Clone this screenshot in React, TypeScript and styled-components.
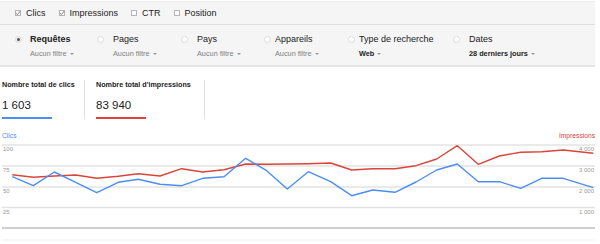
import * as React from 'react'
import styled, { createGlobalStyle } from 'styled-components'

const GlobalStyle = createGlobalStyle`
    body {
        margin: 0;
        background: #fff;
        font-family: "Liberation Sans", Arial, sans-serif;
        color: #222;
    }
`

type Pt = [number, number]

// points read off the chart, page coordinates (y offset by chart top later)
const clics: Pt[] = [
    [12.3, 176.7], [33.3, 185.7], [54.3, 172], [75.7, 182.3], [96.7, 192.7], [118.3, 182.3],
    [138.3, 179.3], [160, 184.3], [181.7, 185.7], [202.7, 178.3], [224, 176.7], [245.7, 158.3],
    [266.7, 170.7], [287.3, 189], [308.3, 171.7], [330.7, 181.7], [351.7, 195.7], [372.7, 190],
    [395, 192.3], [416, 182], [436.7, 170], [457.3, 164], [478.3, 181.7], [499.3, 181.7],
    [520.7, 188.3], [541.7, 178.3], [563.3, 178.3], [593.3, 187.7],
]

const impressions: Pt[] = [
    [12.3, 174.7], [33.3, 177.3], [54.3, 176], [75.7, 175], [96.7, 178.3], [118.3, 176.3],
    [138.3, 173.7], [160, 176], [181.7, 168.7], [202.7, 172], [224, 169.7], [245.7, 164],
    [266.7, 164.3], [287.3, 164], [308.3, 163.7], [330.7, 163], [351.7, 170], [372.7, 168.7],
    [395, 168.7], [416, 165.7], [436.7, 159], [457.3, 145.7], [478.3, 164.3], [499.3, 156],
    [520.7, 152.3], [541.7, 151.7], [563.3, 150], [593.3, 153.3],
]

const CHART_TOP = 140

const toPath = (pts: Pt[]) =>
    pts.map(([x, y]) => `${x},${(y - CHART_TOP).toFixed(1)}`).join(' ')

const metricsToggles = [
    { label: 'Clics', checked: true },
    { label: 'Impressions', checked: true },
    { label: 'CTR', checked: false },
    { label: 'Position', checked: false },
]

const filters = [
    { title: 'Requêtes', sub: 'Aucun filtre', selected: true, width: 82, gap: 8, strong: false },
    { title: 'Pages', sub: 'Aucun filtre', selected: false, width: 84, gap: 9, strong: false },
    { title: 'Pays', sub: 'Aucun filtre', selected: false, width: 83, gap: 9, strong: false },
    { title: 'Appareils', sub: 'Aucun filtre', selected: false, width: 84, gap: 4, strong: false },
    { title: 'Type de recherche', sub: 'Web', selected: false, width: 105, gap: 4, strong: true },
    { title: 'Dates', sub: '28 derniers jours', selected: false, width: 120, gap: 9, strong: true },
]

const grid = [
    { y: 5, left: '100', right: '4 000' },
    { y: 26, left: '75', right: '3 000' },
    { y: 47, left: '50', right: '2 000' },
    { y: 67.5, left: '25', right: '1 000' },
]

const App = () => {
    return (
        <Page>
            <GlobalStyle />
            <TopBar>
                {metricsToggles.map(t => (
                    <Toggle key={t.label}>
                        <CheckBox>
                            {t.checked && (
                                <svg width="6" height="6" viewBox="0 0 6 6">
                                    <path d="M0.8 3.1 L2.4 4.6 L5.3 1" fill="none" stroke="#777" strokeWidth="0.9" />
                                </svg>
                            )}
                        </CheckBox>
                        {t.label}
                    </Toggle>
                ))}
            </TopBar>

            <FilterBar>
                {filters.map(f => (
                    <Filter key={f.title} $w={f.width} $gap={f.gap}>
                        <Radio $on={f.selected} />
                        <div>
                            <FilterTitle $on={f.selected}>{f.title}</FilterTitle>
                            <FilterSub $strong={f.strong}>
                                {f.sub}
                                <Caret />
                            </FilterSub>
                        </div>
                    </Filter>
                ))}
            </FilterBar>

            <Metrics>
                <Metric $w={85} $pad={2}>
                    <MetricTitle>Nombre total de clics</MetricTitle>
                    <MetricValue>1 603</MetricValue>
                    <Underline $color="#4d8df6" />
                </Metric>
                <Metric $w={120} $pad={11}>
                    <MetricTitle>Nombre total d'impressions</MetricTitle>
                    <MetricValue>83 940</MetricValue>
                    <Underline $color="#d9453a" />
                </Metric>
            </Metrics>

            <Legend>
                <LegendLabel $color="#4d8df6">Clics</LegendLabel>
                <LegendLabel $color="#d9453a">Impressions</LegendLabel>
            </Legend>

            <Chart width="595" height="104" viewBox="0 0 595 104">
                {grid.map(g => (
                    <line key={g.left} x1="2" x2="595" y1={g.y} y2={g.y} stroke="#e3e3e3" strokeWidth="1.3" />
                ))}
                <line x1="2" x2="595" y1="88" y2="88" stroke="#9e9e9e" strokeWidth="1" />
                <line x1="2" x2="595" y1="100" y2="100" stroke="#f0f0f0" strokeWidth="1" />
                {grid.map(g => (
                    <React.Fragment key={'t' + g.left}>
                        <AxisText x="3" y={g.y + 6}>{g.left}</AxisText>
                        <AxisText x="594" y={g.y + 6} textAnchor="end">{g.right}</AxisText>
                    </React.Fragment>
                ))}
                <polyline points={toPath(impressions)} fill="none" stroke="#d9453a" strokeWidth="1.4" strokeLinejoin="round" />
                <polyline points={toPath(clics)} fill="none" stroke="#4d8df6" strokeWidth="1.4" strokeLinejoin="round" />
            </Chart>
        </Page>
    )
}

const Page = styled.div`
    width: 595px;
`

const TopBar = styled.div`
    margin-top: 1px;
    height: 22px;
    display: flex;
    align-items: center;
    padding-left: 15px;
    background: #f5f5f5;
    border-top: 1px solid #ebebeb;
    border-bottom: 1px solid #e0e0e0;
`

const Toggle = styled.label`
    display: flex;
    align-items: center;
    gap: 5px;
    margin-right: 13px;
    font-size: 9px;
    color: #222;
`

const CheckBox = styled.span`
    width: 6px;
    height: 6px;
    border: 1px solid #b5b5b5;
    background: #fff;
    box-sizing: border-box;
    display: flex;
    align-items: center;
    justify-content: center;
    overflow: visible;
    svg {
        flex: none;
    }
`

const FilterBar = styled.div`
    height: 40px;
    display: flex;
    padding-left: 15px;
    background: #f5f5f5;
    border-bottom: 2px solid #e6e6e6;
`

const Filter = styled.div<{ $w: number; $gap: number }>`
    width: ${p => p.$w}px;
    flex: none;
    display: flex;
    gap: ${p => p.$gap}px;
    padding-top: 11px;
`

const Radio = styled.span<{ $on: boolean }>`
    width: 7px;
    height: 7px;
    border-radius: 50%;
    box-sizing: border-box;
    border: 1px solid ${p => (p.$on ? '#e0e0e0' : '#dcdcdc')};
    background: ${p => (p.$on ? '#eeeeee' : '#ffffff')};
    display: flex;
    align-items: center;
    justify-content: center;
    &::after {
        content: '';
        display: ${p => (p.$on ? 'block' : 'none')};
        width: 3px;
        height: 3px;
        border-radius: 50%;
        background: #555;
    }
`

const FilterTitle = styled.div<{ $on: boolean }>`
    font-size: 9px;
    line-height: 9px;
    margin-top: -1px;
    font-weight: ${p => (p.$on ? 'bold' : 'normal')};
    color: #222;
    white-space: nowrap;
`

const FilterSub = styled.div<{ $strong: boolean }>`
    margin-top: 6px;
    font-size: 7.3px;
    line-height: 8px;
    white-space: nowrap;
    display: flex;
    align-items: center;
    color: ${p => (p.$strong ? '#222' : '#808080')};
    font-weight: ${p => (p.$strong ? 'bold' : 'normal')};
`

const Caret = styled.span`
    margin-left: 3px;
    width: 0;
    height: 0;
    border-left: 2px solid transparent;
    border-right: 2px solid transparent;
    border-top: 2.5px solid #999;
`

const Metrics = styled.div`
    display: flex;
    margin-top: 13px;
`

const Metric = styled.div<{ $w: number; $pad: number }>`
    width: ${p => p.$w}px;
    padding-left: ${p => p.$pad}px;
    box-sizing: border-box;
    border-right: 1px solid #e0e0e0;
    height: 39px;
`

const MetricTitle = styled.div`
    font-size: 7.2px;
    line-height: 9px;
    font-weight: bold;
    color: #222;
    white-space: nowrap;
`

const MetricValue = styled.div`
    margin-top: 10px;
    font-size: 11.5px;
    line-height: 13px;
    color: #222;
`

const Underline = styled.div<{ $color: string }>`
    margin-top: 5px;
    width: 50px;
    height: 1.5px;
    background: ${p => p.$color};
`

const Legend = styled.div`
    display: flex;
    justify-content: space-between;
    margin-top: 13px;
    padding-left: 2px;
    height: 8px;
`

const LegendLabel = styled.span<{ $color: string }>`
    font-size: 6.7px;
    line-height: 8px;
    color: ${p => p.$color};
`

const Chart = styled.svg`
    display: block;
`

const AxisText = styled.text`
    font-family: "Liberation Sans", Arial, sans-serif;
    font-size: 6px;
    fill: #999;
`

export default App
